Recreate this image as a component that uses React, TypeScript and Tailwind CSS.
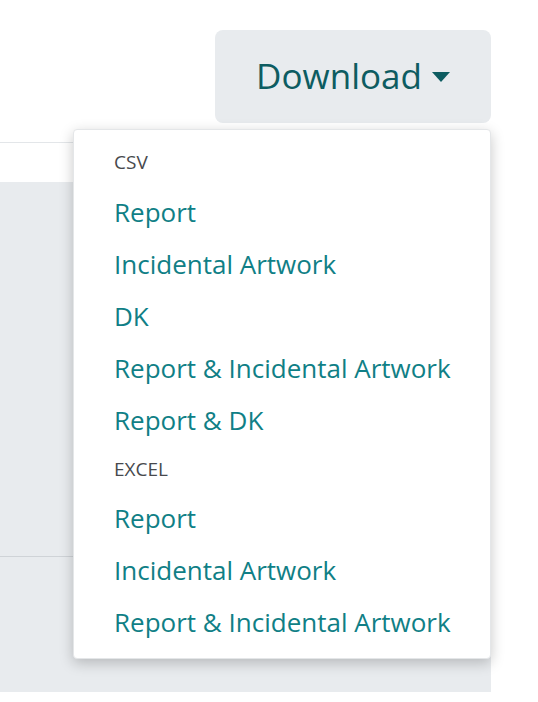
export default function App() {
  const font = { fontFamily: '"Open Sans", "Noto Sans", sans-serif' };
  const Item = ({ t }: { t: string }) => (
    <div className="h-[52px] flex items-center pl-[40px] text-[26px] text-[#107f86]">{t}</div>
  );
  const Head = ({ t, h }: { t: string; h: string }) => (
    <div className={`${h} flex items-center pl-[40px] text-[19px] text-[#47494d]`}>{t}</div>
  );
  return (
    <div className="relative w-[538px] h-[702px] bg-white" style={font}>
      <div className="flex justify-end pr-[47px] pt-[30px]">
        <div className="w-[276px] h-[93px] rounded-[8px] bg-[#e8ebee] flex items-center justify-center gap-[10px] text-[#0d5c61] text-[35px]">
          <span>Download</span>
          <svg width="18" height="10" viewBox="0 0 18 10"><path d="M0 0h18L9 10z" fill="#0d5c61" /></svg>
        </div>
      </div>
      <div className="w-[491px] mt-[19px] border-b border-[#e3e6e9]" />
      <div className="w-[491px] h-[510px] mt-[39px] bg-[#e8ebee] pt-[374px]">
        <div className="border-b border-[#cfd3d7]" />
      </div>
      <div className="absolute left-[73px] top-[129px] w-[418px] h-[530px] bg-white rounded-[4px] border border-[#e4e6e8] shadow-[0_4px_14px_rgba(0,0,0,0.22)] pt-[8px]">
        <Head t="CSV" h="h-[48px]" />
        <Item t="Report" />
        <Item t="Incidental Artwork" />
        <Item t="DK" />
        <Item t="Report & Incidental Artwork" />
        <Item t="Report & DK" />
        <Head t="EXCEL" h="h-[46px]" />
        <Item t="Report" />
        <Item t="Incidental Artwork" />
        <Item t="Report & Incidental Artwork" />
      </div>
    </div>
  );
}
